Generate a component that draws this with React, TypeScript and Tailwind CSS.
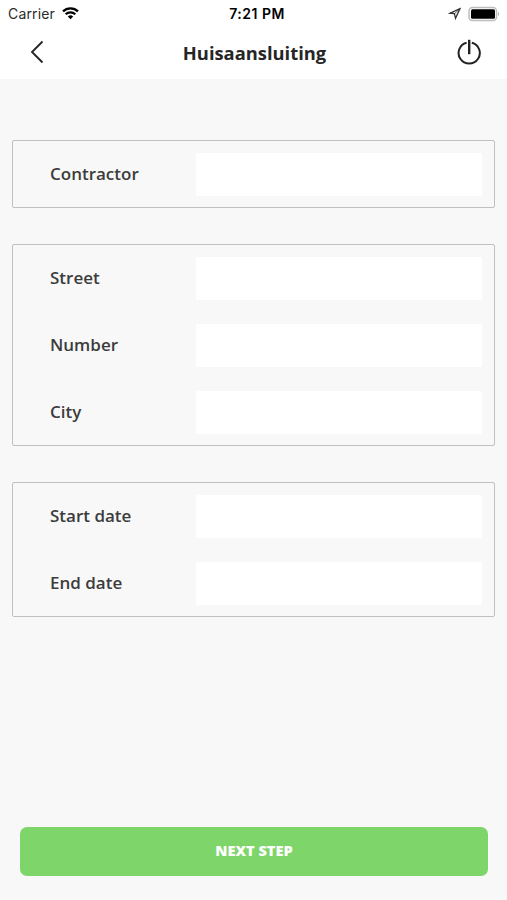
import React from "react";

const groups: string[][] = [
  ["Contractor"],
  ["Street", "Number", "City"],
  ["Start date", "End date"],
];

function Field({ label }: { label: string }) {
  return (
    <label className="flex h-[67px] items-center pl-[37px] pr-3 pt-px first:h-[66px] first:pt-0">
      <span className="w-[146px] shrink-0 text-[17px] font-semibold leading-6 text-[#3c3c3c]">
        {label}
      </span>
      <input className="h-[43px] min-w-0 flex-1 rounded-[2px] bg-white outline-none" />
    </label>
  );
}

function StatusBar() {
  return (
    <div className="grid h-[27px] grid-cols-3 items-center pl-2 pr-[7px] font-['Inter',sans-serif] text-[14px] text-black">
      <div className="flex items-center gap-[7px]">
        <span className="tracking-[0.15px] text-[#2b2b2b]">Carrier</span>
        <svg width="17" height="13" viewBox="0 0 17 13" fill="none" stroke="black" strokeWidth="2.3">
          <path d="M1 4.4a10.7 10.7 0 0 1 15 0" />
          <path d="M3.7 7.3a6.8 6.8 0 0 1 9.6 0" />
          <path d="M8.5 12.2 5.8 9.6a3.9 3.9 0 0 1 5.4 0Z" fill="black" stroke="none" />
        </svg>
      </div>
      <span className="whitespace-nowrap pl-1.5 text-center text-[14px] font-semibold tracking-[0.5px]">7:21 PM</span>
      <div className="flex items-center justify-end gap-[6px]">
        <svg width="13" height="13" viewBox="0 0 13 13" fill="none" stroke="#333" strokeWidth="1.3" strokeLinejoin="miter">
          <path d="M12 1.6 2 6.2l4.4.5 1.1 4.6z" />
          <path d="m6.4 6.7 5-4.4" strokeWidth="0.8" />
        </svg>
        <svg width="33" height="16" viewBox="0 0 33 16" fill="none">
          <rect x="2" y="1.5" width="27.5" height="13" rx="3.5" stroke="#bdbdbd" strokeWidth="1.5" />
          <rect x="4" y="3.2" width="24" height="9.6" rx="1.5" fill="black" />
          <path d="M31 6c1.2.7 1.2 3.3 0 4Z" fill="#999" />
        </svg>
      </div>
    </div>
  );
}

export default function App() {
  return (
    <div className="flex h-[900px] w-[507px] flex-col bg-[#f8f8f8] font-['Open_Sans',sans-serif]">
      <header className="h-[79px] shrink-0 bg-white">
        <StatusBar />
        <div className="flex h-[50px] items-center justify-between pl-[29px] pr-[25px]">
          <button aria-label="Back">
            <svg width="16" height="24" viewBox="0 0 16 24" fill="none" stroke="#222" strokeWidth="1.8">
              <path d="M13.5 1.5 3 12l10.5 10.5" />
            </svg>
          </button>
          <h1 className="pl-[8px] pt-0.5 text-[18.35px] font-bold leading-6 text-[#262626]">Huisaansluiting</h1>
          <button aria-label="Log out">
            <svg width="26" height="26" viewBox="0 0 26 26" fill="none" stroke="#222" strokeWidth="2">
              <path d="M10.6 3.7a10.6 10.6 0 1 0 5.2 0" />
              <path d="M13.2 0.8V15.2" strokeWidth="2.4" />
            </svg>
          </button>
        </div>
      </header>
      <main className="flex flex-1 flex-col gap-9 px-3 pt-[61px]">
        {groups.map((fields) => (
          <section key={fields[0]} className="rounded-[2px] border border-[#c0c0c0]">
            {fields.map((label) => (
              <Field key={label} label={label} />
            ))}
          </section>
        ))}
      </main>
      <footer className="pb-6 pl-5 pr-[19px]">
        <button className="h-[49px] w-full rounded-[7px] bg-[#7ed56a] pb-0.5 text-[14.6px] font-extrabold text-white">
          NEXT STEP
        </button>
      </footer>
    </div>
  );
}
